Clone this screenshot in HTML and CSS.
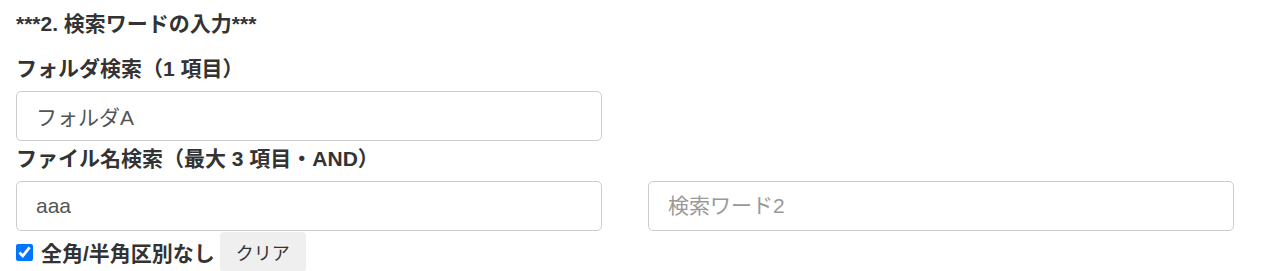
FILE: index.html
```html
<!DOCTYPE html>
<html lang="ja">
<head>
    <meta charset="UTF-8">
    <meta content="width=device-width, initial-scale=1.0" name="viewport">
    <title>検索ワードの入力</title>
    <link rel="stylesheet" href="styles.css">
</head>
<body>

<div class="page">
    <div class="step-title">***2. 検索ワードの入力***</div>

    <div class="field-group">
        <label class="field-label" for="folder">フォルダ検索（1 項目）</label>
        <div class="field-row">
            <input class="form-input" type="text" id="folder" value="フォルダA">
        </div>
    </div>

    <div class="field-group">
        <label class="field-label field-label-tight" for="word1">ファイル名検索（最大 3 項目・AND）</label>
        <div class="field-row">
            <input class="form-input" type="text" id="word1" value="aaa">
            <input class="form-input" type="text" id="word2" placeholder="検索ワード2">
        </div>
    </div>

    <div class="option-row">
        <label class="check-label">
            <input type="checkbox" checked>
            全角/半角区別なし
        </label>
        <button class="clear-button">クリア</button>
    </div>
</div>

</body>
</html>
```

FILE: styles.css
```css
body {
    font-family: "Liberation Sans", Arial, "Noto Sans CJK JP", sans-serif;
    margin: 0;
    background: #fff;
    color: #333;
}

.page {
    padding: 0 16px;
}

.step-title {
    font-size: 21px;
    font-weight: bold;
    line-height: 28px;
    margin: 10px 0 17px 0;
}

.field-label {
    display: block;
    font-size: 21px;
    font-weight: bold;
    line-height: 28px;
    margin-bottom: 8px;
}

.field-label-tight {
    margin-top: 4px;
}

.field-row {
    display: grid;
    grid-template-columns: repeat(2, 586px);
    column-gap: 46px;
}

.form-input {
    box-sizing: border-box;
    height: 50px;
    padding: 0 19px;
    border: 1px solid #ccc;
    border-radius: 5px;
    font-family: inherit;
    font-size: 21px;
    color: #555;
    background: #fff;
    outline: none;
}

.form-input::placeholder {
    color: #999;
}

.option-row {
    display: flex;
    align-items: center;
    margin-top: 1px;
}

.check-label {
    display: flex;
    align-items: center;
    font-size: 21px;
    font-weight: bold;
}

.check-label input {
    width: 17px;
    height: 17px;
    margin: 0 8px 0 0;
}

.clear-button {
    width: 86px;
    height: 40px;
    margin-left: 5px;
    padding: 0;
    border: none;
    border-radius: 4px;
    background: #efefef;
    color: #333;
    font-family: inherit;
    font-size: 18px;
    cursor: pointer;
}
```
